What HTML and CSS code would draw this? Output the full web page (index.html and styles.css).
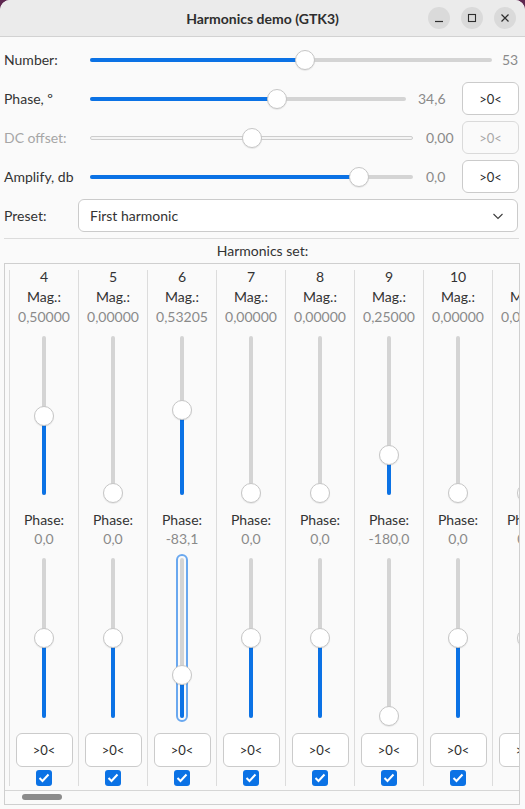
FILE: index.html
```
<!DOCTYPE html>
<html>
<head>
<meta charset="utf-8">
<link rel="stylesheet" href="styles.css">
</head>
<body>
<div class="window">
  <header class="titlebar">
    <div></div>
    <div class="title">Harmonics demo (GTK3)</div>
    <div class="wbtns">
      <span class="wbtn"><svg width="10" height="10" viewBox="0 0 10 10"><path d="M1 8.5h8" stroke="#2e2e2e" stroke-width="1.2"/></svg></span>
      <span class="wbtn"><svg width="10" height="10" viewBox="0 0 10 10"><rect x="1.5" y="1.5" width="7" height="7" fill="none" stroke="#2e2e2e" stroke-width="1.1"/></svg></span>
      <span class="wbtn"><svg width="10" height="10" viewBox="0 0 10 10"><path d="M1.5 1.5l7 7M8.5 1.5l-7 7" stroke="#2e2e2e" stroke-width="1.2"/></svg></span>
    </div>
  </header>

  <main class="content">
    <div class="row">
      <span class="rlabel">Number:</span>
      <div class="hscale"><div class="trough"><div class="fill" style="width:53.5%"></div><div class="knob" style="left:53.5%"></div></div></div>
      <span class="hval v1">53</span>
    </div>
    <div class="row">
      <span class="rlabel">Phase, º</span>
      <div class="hscale"><div class="trough"><div class="fill" style="width:59.2%"></div><div class="knob" style="left:59.2%"></div></div></div>
      <span class="hval v2">34,6</span>
      <button class="zbtn">&gt;0&lt;</button>
    </div>
    <div class="row disabled">
      <span class="rlabel">DC offset:</span>
      <div class="hscale"><div class="trough"><div class="knob" style="left:50.2%"></div></div></div>
      <span class="hval v3">0,00</span>
      <button class="zbtn">&gt;0&lt;</button>
    </div>
    <div class="row">
      <span class="rlabel">Amplify, db</span>
      <div class="hscale"><div class="trough"><div class="fill" style="width:83.3%"></div><div class="knob" style="left:83.3%"></div></div></div>
      <span class="hval v3">0,0</span>
      <button class="zbtn">&gt;0&lt;</button>
    </div>
    <div class="row">
      <span class="rlabel">Preset:</span>
      <div class="combo">
        <span>First harmonic</span>
        <svg width="12" height="8" viewBox="0 0 12 8"><path d="M1.5 2l4.5 4.5L10.5 2" fill="none" stroke="#3d3d3d" stroke-width="1.1"/></svg>
      </div>
    </div>
    <div class="sep"></div>
    <div class="settitle">Harmonics set:</div>

    <div class="frame">
      <div class="viewport">
        <div class="cols">
          <div class="col">
            <div class="num">4</div><div class="clbl">Mag.:</div><div class="cval">0,50000</div>
            <div class="vscale mag"><div class="vtrough"><div class="vfill" style="top:50%"></div><div class="vknob" style="top:50%"></div></div></div>
            <div class="clbl ph">Phase:</div><div class="cval pv">0,0</div>
            <div class="vscale phs"><div class="vtrough"><div class="vfill" style="top:50%"></div><div class="vknob" style="top:50%"></div></div></div>
            <button class="zbtn cbtn">&gt;0&lt;</button>
            <span class="chk"><svg width="12" height="10" viewBox="0 0 12 10"><path d="M1.5 5l3 3 6-6.5" fill="none" stroke="#fff" stroke-width="2"/></svg></span>
          </div>
          <div class="col">
            <div class="num">5</div><div class="clbl">Mag.:</div><div class="cval">0,00000</div>
            <div class="vscale mag"><div class="vtrough"><div class="vfill" style="top:99%"></div><div class="vknob" style="top:99%"></div></div></div>
            <div class="clbl ph">Phase:</div><div class="cval pv">0,0</div>
            <div class="vscale phs"><div class="vtrough"><div class="vfill" style="top:50%"></div><div class="vknob" style="top:50%"></div></div></div>
            <button class="zbtn cbtn">&gt;0&lt;</button>
            <span class="chk"><svg width="12" height="10" viewBox="0 0 12 10"><path d="M1.5 5l3 3 6-6.5" fill="none" stroke="#fff" stroke-width="2"/></svg></span>
          </div>
          <div class="col">
            <div class="num">6</div><div class="clbl">Mag.:</div><div class="cval">0,53205</div>
            <div class="vscale mag"><div class="vtrough"><div class="vfill" style="top:46.5%"></div><div class="vknob" style="top:46.5%"></div></div></div>
            <div class="clbl ph">Phase:</div><div class="cval pv">-83,1</div>
            <div class="vscale phs focused"><div class="vtrough"><div class="vfill" style="top:73%"></div><div class="vknob" style="top:73%"></div></div></div>
            <button class="zbtn cbtn">&gt;0&lt;</button>
            <span class="chk"><svg width="12" height="10" viewBox="0 0 12 10"><path d="M1.5 5l3 3 6-6.5" fill="none" stroke="#fff" stroke-width="2"/></svg></span>
          </div>
          <div class="col">
            <div class="num">7</div><div class="clbl">Mag.:</div><div class="cval">0,00000</div>
            <div class="vscale mag"><div class="vtrough"><div class="vfill" style="top:99%"></div><div class="vknob" style="top:99%"></div></div></div>
            <div class="clbl ph">Phase:</div><div class="cval pv">0,0</div>
            <div class="vscale phs"><div class="vtrough"><div class="vfill" style="top:50%"></div><div class="vknob" style="top:50%"></div></div></div>
            <button class="zbtn cbtn">&gt;0&lt;</button>
            <span class="chk"><svg width="12" height="10" viewBox="0 0 12 10"><path d="M1.5 5l3 3 6-6.5" fill="none" stroke="#fff" stroke-width="2"/></svg></span>
          </div>
          <div class="col">
            <div class="num">8</div><div class="clbl">Mag.:</div><div class="cval">0,00000</div>
            <div class="vscale mag"><div class="vtrough"><div class="vfill" style="top:99%"></div><div class="vknob" style="top:99%"></div></div></div>
            <div class="clbl ph">Phase:</div><div class="cval pv">0,0</div>
            <div class="vscale phs"><div class="vtrough"><div class="vfill" style="top:50%"></div><div class="vknob" style="top:50%"></div></div></div>
            <button class="zbtn cbtn">&gt;0&lt;</button>
            <span class="chk"><svg width="12" height="10" viewBox="0 0 12 10"><path d="M1.5 5l3 3 6-6.5" fill="none" stroke="#fff" stroke-width="2"/></svg></span>
          </div>
          <div class="col">
            <div class="num">9</div><div class="clbl">Mag.:</div><div class="cval">0,25000</div>
            <div class="vscale mag"><div class="vtrough"><div class="vfill" style="top:74.8%"></div><div class="vknob" style="top:74.8%"></div></div></div>
            <div class="clbl ph">Phase:</div><div class="cval pv">-180,0</div>
            <div class="vscale phs"><div class="vtrough"><div class="vfill" style="top:98.5%"></div><div class="vknob" style="top:98.5%"></div></div></div>
            <button class="zbtn cbtn">&gt;0&lt;</button>
            <span class="chk"><svg width="12" height="10" viewBox="0 0 12 10"><path d="M1.5 5l3 3 6-6.5" fill="none" stroke="#fff" stroke-width="2"/></svg></span>
          </div>
          <div class="col">
            <div class="num">10</div><div class="clbl">Mag.:</div><div class="cval">0,00000</div>
            <div class="vscale mag"><div class="vtrough"><div class="vfill" style="top:99%"></div><div class="vknob" style="top:99%"></div></div></div>
            <div class="clbl ph">Phase:</div><div class="cval pv">0,0</div>
            <div class="vscale phs"><div class="vtrough"><div class="vfill" style="top:50%"></div><div class="vknob" style="top:50%"></div></div></div>
            <button class="zbtn cbtn">&gt;0&lt;</button>
            <span class="chk"><svg width="12" height="10" viewBox="0 0 12 10"><path d="M1.5 5l3 3 6-6.5" fill="none" stroke="#fff" stroke-width="2"/></svg></span>
          </div>
          <div class="col">
            <div class="num">11</div><div class="clbl">Mag.:</div><div class="cval">0,00000</div>
            <div class="vscale mag"><div class="vtrough"><div class="vfill" style="top:99%"></div><div class="vknob" style="top:99%"></div></div></div>
            <div class="clbl ph">Phase:</div><div class="cval pv">0,0</div>
            <div class="vscale phs"><div class="vtrough"><div class="vfill" style="top:50%"></div><div class="vknob" style="top:50%"></div></div></div>
            <button class="zbtn cbtn">&gt;0&lt;</button>
            <span class="chk"><svg width="12" height="10" viewBox="0 0 12 10"><path d="M1.5 5l3 3 6-6.5" fill="none" stroke="#fff" stroke-width="2"/></svg></span>
          </div>
        </div>
      </div>
      <div class="hscrollbar"><span class="thumb"></span></div>
    </div>
  </main>
</div>
</body>
</html>
```

FILE: styles.css
```
* { box-sizing: border-box; }
html, body {
  margin: 0;
  padding: 0;
  background: #5e2750;
  height: 809px;
  overflow: hidden;
}
body {
  font-family: Lato, "Noto Sans", sans-serif;
  font-size: 14px;
  color: #333333;
}
.window {
  width: 525px;
  height: 809px;
  background: #fafafa;
  border-radius: 10px 10px 0 0;
  overflow: hidden;
}
.titlebar {
  height: 37px;
  background: #ebebeb;
  border-bottom: 1px solid #d2d2d2;
  display: grid;
  grid-template-columns: 1fr auto 1fr;
  align-items: center;
}
.title {
  font-weight: 700;
  font-size: 14px;
  color: #2e2e2e;
}
.wbtns {
  display: flex;
  justify-content: flex-end;
  gap: 11px;
  padding-right: 9px;
}
.wbtn {
  width: 22px;
  height: 22px;
  border-radius: 50%;
  background: #dadada;
  display: flex;
  align-items: center;
  justify-content: center;
}
.content {
  padding-top: 6px;
  display: flex;
  flex-direction: column;
}
.row {
  height: 33px;
  margin-bottom: 6px;
  display: flex;
  align-items: center;
  padding: 0 6px 0 4px;
}
.rlabel {
  width: 74px;
  flex: none;
  white-space: nowrap;
}
.hscale {
  flex: 1;
  padding-left: 12px;
  display: flex;
  align-items: center;
}
.trough {
  position: relative;
  flex: 1;
  height: 4px;
  border-radius: 2px;
  background: #d4d4d4;
}
.fill {
  height: 4px;
  border-radius: 2px;
  background: #0b72e5;
}
.knob {
  position: absolute;
  top: 50%;
  width: 20px;
  height: 20px;
  margin: -10px 0 0 -10px;
  border-radius: 50%;
  background: #ffffff;
  border: 1px solid #c6c6c6;
  box-shadow: 0 1px 1px rgba(0,0,0,0.08);
}
.hval {
  flex: none;
  color: #8a8a8a;
  white-space: nowrap;
}
.v1 { width: 17px; margin-left: 10px; }
.v2 { width: 38px; margin-left: 12px; }
.v3 { width: 30px; margin-left: 13px; }
.zbtn {
  flex: none;
  width: 57px;
  height: 33px;
  margin-left: 6px;
  border: 1px solid #cbcbcb;
  border-radius: 6px;
  background: #ffffff;
  font-family: Lato, "Noto Sans", sans-serif;
  font-size: 13px;
  color: #2e2e2e;
  padding: 0;
}
.disabled .rlabel { color: #a6a6a6; }
.disabled .trough {
  background: #f4f4f4;
  border: 1px solid #cdcdcd;
}
.disabled .zbtn {
  color: #a8a8a8;
  border-color: #dadada;
  background: #fafafa;
}
.combo {
  flex: 1;
  height: 33px;
  margin-right: 1px;
  border: 1px solid #cbcbcb;
  border-radius: 6px;
  background: #ffffff;
  display: flex;
  align-items: center;
  justify-content: space-between;
  padding: 0 13px 0 11px;
}
.sep {
  height: 1px;
  background: #dcdcdc;
  margin: 0 6px 0 4px;
}
.settitle {
  text-align: center;
  line-height: 24px;
  height: 24px;
}
.frame {
  margin: 0 5px 0 4px;
  height: 542px;
  border: 1px solid #cfcfcf;
  display: flex;
  flex-direction: column;
}
.viewport {
  flex: 1;
  overflow: hidden;
  padding: 6px 0 0 4px;
}
.cols {
  display: flex;
}
.col {
  flex: none;
  width: 69px;
  height: 516px;
  border-left: 1px solid #dcdcdc;
  display: flex;
  flex-direction: column;
  align-items: center;
}
.num {
  line-height: 14px;
  height: 14px;
}
.clbl {
  margin-top: 3px;
  line-height: 20px;
}
.clbl.ph {
  margin-top: 5px;
}
.cval {
  line-height: 20px;
  color: #8a8a8a;
}
.cval.pv {
  line-height: 18px;
}
.vscale {
  display: flex;
  justify-content: center;
  width: 20px;
}
.vscale.mag {
  height: 178px;
  padding: 9px 0 10px;
}
.vscale.phs {
  height: 180px;
  padding: 10px 0;
}
.vtrough {
  position: relative;
  width: 4px;
  height: 100%;
  border-radius: 2px;
  background: #d4d4d4;
}
.vfill {
  position: absolute;
  left: 0;
  right: 0;
  bottom: 0;
  border-radius: 2px;
  background: #0b72e5;
}
.vknob {
  position: absolute;
  left: 50%;
  width: 20px;
  height: 20px;
  margin: -10px 0 0 -10px;
  border-radius: 50%;
  background: #ffffff;
  border: 1px solid #c6c6c6;
  box-shadow: 0 1px 1px rgba(0,0,0,0.08);
}
.focused .vtrough {
  outline: 2px solid #6aa8ef;
  outline-offset: 2px;
  border-radius: 3px;
}
.cbtn {
  margin: 5px 0 0 0;
  height: 34px;
}
.chk {
  margin-top: 3px;
  width: 16px;
  height: 16px;
  border-radius: 3px;
  background: #0b72e5;
  display: flex;
  align-items: center;
  justify-content: center;
}
.hscrollbar {
  height: 14px;
  border-top: 1px solid #d6d6d6;
  padding: 3px 0 0 17px;
}
.thumb {
  display: block;
  width: 40px;
  height: 6px;
  border-radius: 3px;
  background: #8c8c8c;
}
```
